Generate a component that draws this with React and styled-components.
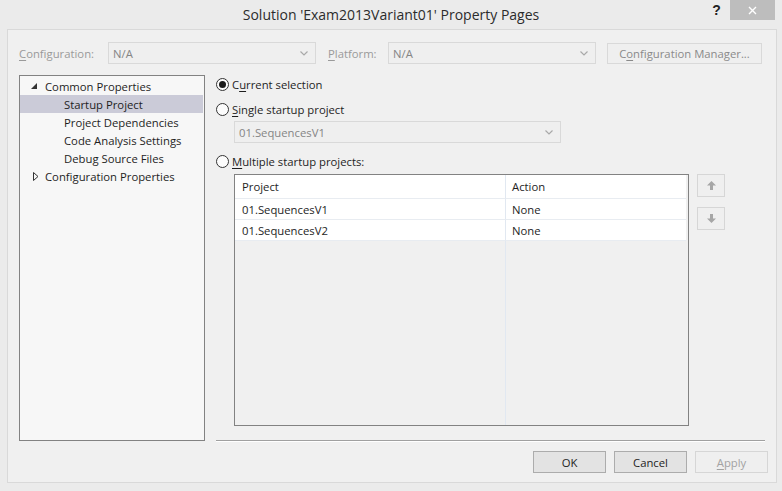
import React from 'react';
import styled, { createGlobalStyle } from 'styled-components';

const GlobalStyle = createGlobalStyle`
  html, body {
    margin: 0;
    padding: 0;
    background: #ebebeb;
  }
  body {
    font-family: 'Open Sans', 'Noto Sans', sans-serif;
    font-size: 11.3px;
    color: #1e1e1e;
  }
  * { box-sizing: border-box; }
`;

const Window = styled.div`
  width: 782px;
  height: 491px;
  background: #ebebeb;
  display: flex;
  flex-direction: column;
  overflow: hidden;
`;

// title bar: title centred, help and close at the right
const TitleBar = styled.div`
  height: 29px;
  flex: none;
  display: grid;
  grid-template-columns: 1fr auto 1fr;
  align-items: start;
`;

const Title = styled.div`
  grid-column: 2;
  font-size: 14px;
  line-height: 30px;
  color: #2b2b2b;
`;

const Caption = styled.div`
  grid-column: 3;
  justify-self: end;
  display: flex;
  align-items: flex-start;
  margin-right: 7px;
`;

const HelpButton = styled.div`
  width: 27px;
  height: 20px;
  font-family: 'Liberation Sans', sans-serif;
  font-weight: bold;
  font-size: 14px;
  line-height: 20px;
  text-align: center;
  color: #222;
`;

const CloseButton = styled.div`
  width: 45px;
  height: 20px;
  background: #bdbdbd;
  display: flex;
  align-items: center;
  justify-content: center;
`;

const Client = styled.div`
  flex: 1;
  margin: 0 5px 8px 7px;
  border: 1px solid #d9d9d9;
  background: #f0f0f0;
  padding: 12px 8px 0 11px;
  display: flex;
  flex-direction: column;
`;

const ConfigRow = styled.div`
  display: flex;
  align-items: center;
  height: 22px;
`;

const DimLabel = styled.span`
  width: ${p => p.$width}px;
  color: #9a9a9a;
  flex: none;
`;

const AccessKey = styled.u`
  text-decoration: underline;
  text-underline-offset: 2px;
`;

const Combo = styled.div`
  width: ${p => p.$width}px;
  height: 22px;
  flex: none;
  border: 1px solid #d9d9d9;
  background: #efefef;
  color: #858585;
  display: flex;
  align-items: center;
  justify-content: space-between;
  padding: 0 7px 0 4px;
  margin-right: ${p => p.$gap || 0}px;
`;

const ManagerButton = styled.div`
  width: 155px;
  height: 21px;
  margin-left: 11px;
  border: 1px solid #d9d9d9;
  background: #efefef;
  color: #8a8a8a;
  display: flex;
  align-items: center;
  justify-content: center;
`;

const Body = styled.div`
  margin-top: 11px;
  height: 367px;
  display: flex;
`;

const Tree = styled.div`
  width: 186px;
  height: 366px;
  flex: none;
  border: 1px solid #828282;
  background: #f7f7f7;
  padding: 1px 1px 0 0;
`;

const TreeRow = styled.div`
  height: 18px;
  display: flex;
  align-items: center;
  padding-left: ${p => p.$indent}px;
  background: ${p => (p.$selected ? '#cbcbd8' : 'transparent')};
  white-space: nowrap;
`;

const Expander = styled.span`
  width: 15px;
  display: flex;
  align-items: center;
`;

const RightColumn = styled.div`
  flex: 1;
  margin-left: 11px;
  display: flex;
  flex-direction: column;
`;

const RadioRow = styled.label`
  height: 18px;
  display: flex;
  align-items: center;
  gap: 3px;
  margin-top: ${p => p.$top || 0}px;
`;

const RadioDot = styled.span`
  width: 13px;
  height: 13px;
  border-radius: 50%;
  border: 1px solid #333;
  background: #fcfcfc;
  display: flex;
  align-items: center;
  justify-content: center;
  &::after {
    content: '';
    width: 7px;
    height: 7px;
    border-radius: 50%;
    background: ${p => (p.$checked ? '#1a1a1a' : 'transparent')};
  }
`;

const IndentBlock = styled.div`
  margin-left: 18px;
  margin-top: ${p => p.$top || 0}px;
  display: flex;
  gap: 8px;
  align-items: flex-start;
`;

const GridBox = styled.div`
  width: 455px;
  height: 252px;
  border: 1px solid #828282;
  background: #f0f0f0;
  display: grid;
  grid-template-columns: 271px 1fr;
  grid-template-rows: 24px 21px 21px 1fr;
  padding-right: 2px;
`;

const Cell = styled.div`
  background: ${p => (p.$filler ? 'transparent' : '#fff')};
  border-bottom: ${p => (p.$filler ? 'none' : '1px solid #e8ecf1')};
  border-right: ${p => (p.$first ? '1px solid #e1e8f1' : 'none')};
  padding-left: ${p => (p.$first ? 7 : 6)}px;
  display: flex;
  align-items: center;
  color: #1e1e1e;
`;

const MoveButtons = styled.div`
  display: flex;
  flex-direction: column;
  gap: 10px;
`;

const MoveButton = styled.div`
  width: 28px;
  height: 23px;
  border: 1px solid #d6d6d6;
  background: #efefef;
  display: flex;
  align-items: center;
  justify-content: center;
`;

const Separator = styled.div`
  margin-top: auto;
  margin-right: 3px;
  height: 2px;
  border-top: 1px solid #a0a0a0;
  border-bottom: 1px solid #ffffff;
`;

const Footer = styled.div`
  margin-top: 9px;
  display: flex;
  justify-content: flex-end;
  gap: 8px;
`;

const DialogButton = styled.div`
  width: 73px;
  height: 22px;
  border: 1px solid ${p => (p.$disabled ? '#d6d6d6' : '#acacac')};
  background: ${p => (p.$disabled ? '#efefef' : '#e3e3e3')};
  color: ${p => (p.$disabled ? '#a2a2a2' : '#1e1e1e')};
  display: flex;
  align-items: center;
  justify-content: center;
`;

const Chevron = () => (
  <svg width="8" height="5" viewBox="0 0 8 5">
    <polyline points="0.5,0.5 4,4 7.5,0.5" fill="none" stroke="#a9a9a9" strokeWidth="1.2" />
  </svg>
);

const ExpandedGlyph = () => (
  <svg width="6" height="6" viewBox="0 0 6 6">
    <polygon points="6,0 6,6 0,6" fill="#333" />
  </svg>
);

const CollapsedGlyph = () => (
  <svg width="6" height="9" viewBox="0 0 6 9">
    <polygon points="0.5,0.5 5,4.5 0.5,8.5" fill="none" stroke="#333" strokeWidth="1" />
  </svg>
);

const Arrow = ({ down }) => (
  <svg width="9" height="9" viewBox="0 0 9 9" style={{ transform: down ? 'rotate(180deg)' : 'none' }}>
    <polygon points="4.5,0 9,4.5 0,4.5" fill="#a6a6a6" />
    <rect x="3" y="4" width="3" height="5" fill="#a6a6a6" />
  </svg>
);

const treeItems = [
  { label: 'Common Properties', level: 0, glyph: 'open' },
  { label: 'Startup Project', level: 1, selected: true },
  { label: 'Project Dependencies', level: 1 },
  { label: 'Code Analysis Settings', level: 1 },
  { label: 'Debug Source Files', level: 1 },
  { label: 'Configuration Properties', level: 0, glyph: 'closed' },
];

const projects = [
  { name: '01.SequencesV1', action: 'None' },
  { name: '01.SequencesV2', action: 'None' },
];

export default function App() {
  return (
    <Window>
      <GlobalStyle />
      <TitleBar>
        <Title>Solution 'Exam2013Variant01' Property Pages</Title>
        <Caption>
          <HelpButton>?</HelpButton>
          <CloseButton>
            <svg width="9" height="9" viewBox="0 0 9 9">
              <path d="M1 1 L8 8 M8 1 L1 8" stroke="#fff" strokeWidth="1.4" />
            </svg>
          </CloseButton>
        </Caption>
      </TitleBar>

      <Client>
        <ConfigRow>
          <DimLabel $width={89}><AccessKey>C</AccessKey>onfiguration:</DimLabel>
          <Combo $width={208} $gap={12}>N/A<Chevron /></Combo>
          <DimLabel $width={60}><AccessKey>P</AccessKey>latform:</DimLabel>
          <Combo $width={208}>N/A<Chevron /></Combo>
          <ManagerButton>C<AccessKey>o</AccessKey>nfiguration Manager...</ManagerButton>
        </ConfigRow>

        <Body>
          <Tree>
            {treeItems.map(item => (
              <TreeRow key={item.label} $indent={item.level ? 44 : 10} $selected={item.selected}>
                {item.level === 0 && (
                  <Expander style={{ paddingLeft: item.glyph === 'open' ? 1 : 3 }}>
                    {item.glyph === 'open' ? <ExpandedGlyph /> : <CollapsedGlyph />}
                  </Expander>
                )}
                {item.label}
              </TreeRow>
            ))}
          </Tree>

          <RightColumn>
            <RadioRow>
              <RadioDot $checked />
              <span>C<AccessKey>u</AccessKey>rrent selection</span>
            </RadioRow>
            <RadioRow $top={7}>
              <RadioDot />
              <span><AccessKey>S</AccessKey>ingle startup project</span>
            </RadioRow>
            <IndentBlock $top={3}>
              <Combo $width={327}>01.SequencesV1<Chevron /></Combo>
            </IndentBlock>
            <RadioRow $top={9}>
              <RadioDot />
              <span><AccessKey>M</AccessKey>ultiple startup projects:</span>
            </RadioRow>
            <IndentBlock $top={4}>
              <GridBox>
                <Cell $first>Project</Cell>
                <Cell>Action</Cell>
                {projects.map(p => (
                  <React.Fragment key={p.name}>
                    <Cell $first>{p.name}</Cell>
                    <Cell>{p.action}</Cell>
                  </React.Fragment>
                ))}
                <Cell $first $filler />
                <Cell $filler />
              </GridBox>
              <MoveButtons>
                <MoveButton><Arrow /></MoveButton>
                <MoveButton><Arrow down /></MoveButton>
              </MoveButtons>
            </IndentBlock>
            <Separator />
          </RightColumn>
        </Body>

        <Footer>
          <DialogButton>OK</DialogButton>
          <DialogButton>Cancel</DialogButton>
          <DialogButton $disabled><span><AccessKey>A</AccessKey>pply</span></DialogButton>
        </Footer>
      </Client>
    </Window>
  );
}
